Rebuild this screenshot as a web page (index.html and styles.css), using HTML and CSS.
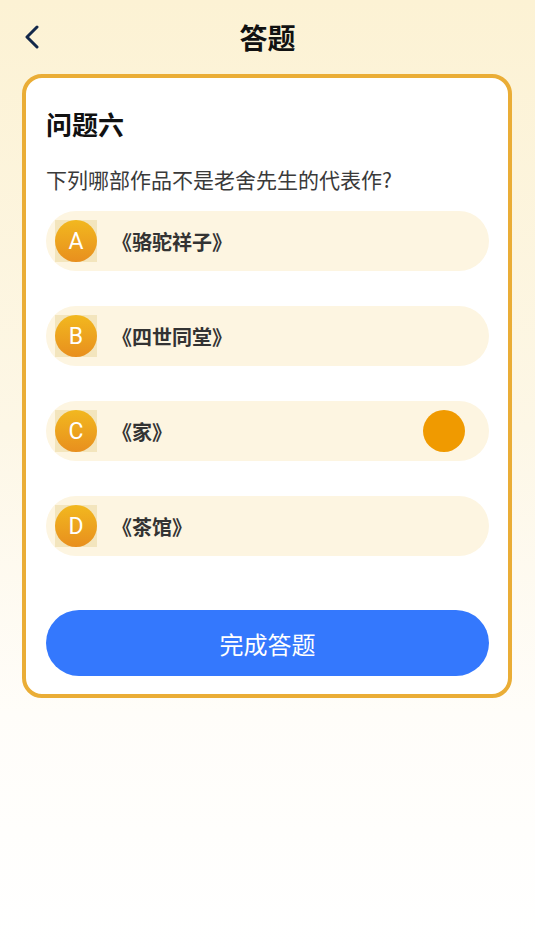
FILE: index.html
```html
<!DOCTYPE html>
<html lang="zh-CN">
<head>
    <meta charset="UTF-8">
    <meta name="viewport" content="width=device-width, initial-scale=1.0">
    <title>答题</title>
    <link rel="stylesheet" href="styles.css">
</head>
<body>
    <div class="header">
        <a class="back" href="#">
            <svg width="16" height="26" viewBox="0 0 16 26">
                <polyline points="12,3 2,13 12,23" fill="none" stroke="#13284a" stroke-width="3" stroke-linecap="round" stroke-linejoin="round"/>
            </svg>
        </a>
        <h1>答题</h1>
    </div>

    <div class="card">
        <h2>问题六</h2>
        <p class="question">下列哪部作品不是老舍先生的代表作?</p>

        <div class="options">
            <div class="option">
                <span class="badge"><span class="dot">A</span></span>
                <span class="label">《骆驼祥子》</span>
            </div>
            <div class="option">
                <span class="badge"><span class="dot">B</span></span>
                <span class="label">《四世同堂》</span>
            </div>
            <div class="option selected">
                <span class="badge"><span class="dot">C</span></span>
                <span class="label">《家》</span>
                <span class="mark"></span>
            </div>
            <div class="option">
                <span class="badge"><span class="dot">D</span></span>
                <span class="label">《茶馆》</span>
            </div>
        </div>

        <button class="btn" type="button">完成答题</button>
    </div>
</body>
</html>
```

FILE: styles.css
```css
body {
    margin: 0;
    min-height: 951px;
    font-family: "Noto Sans CJK SC", "Noto Sans", sans-serif;
    background: linear-gradient(180deg, #fcf2d4 0%, #fdf7e6 45%, #fffdf9 75%, #ffffff 100%);
    color: #333;
}

.header {
    height: 74px;
    display: flex;
    align-items: center;
    justify-content: center;
    position: relative;
}

.header h1 {
    margin: 0;
    font-size: 28px;
    font-weight: bold;
    color: #111;
    line-height: 1;
}

.back {
    position: absolute;
    left: 25px;
    top: 24px;
    display: flex;
}

.card {
    margin: 0 23px 0 22px;
    background-color: white;
    border: 4px solid #eaad36;
    border-radius: 20px;
    padding: 28px 19px 18px 20px;
}

.card h2 {
    margin: 0;
    font-size: 26px;
    line-height: 36px;
    font-weight: bold;
    color: #111;
}

.question {
    margin: 22px 0 0;
    font-size: 21px;
    line-height: 30px;
    color: #3a3a3a;
}

.options {
    margin-top: 17px;
    display: flex;
    flex-direction: column;
    gap: 35px;
}

.option {
    height: 60px;
    border-radius: 30px;
    background-color: #fdf5e1;
    display: flex;
    align-items: center;
    padding: 0 24px 0 9px;
}

.badge {
    width: 42px;
    height: 42px;
    background-color: #f3e5bd;
    display: flex;
}

.dot {
    width: 42px;
    height: 42px;
    border-radius: 50%;
    background: linear-gradient(180deg, #f2b81f, #e88f1e);
    color: white;
    font-family: Roboto, "Noto Sans", sans-serif;
    font-size: 23px;
    display: flex;
    align-items: center;
    justify-content: center;
}

.label {
    margin-left: 15px;
    font-size: 20px;
    font-weight: bold;
    color: #333;
}

.mark {
    margin-left: auto;
    width: 42px;
    height: 42px;
    border-radius: 50%;
    background-color: #f09a00;
}

.btn {
    margin-top: 54px;
    width: 100%;
    height: 66px;
    border: none;
    border-radius: 33px;
    background-color: #3478fd;
    color: white;
    font-family: "Noto Sans CJK SC", sans-serif;
    font-size: 24px;
}
```
